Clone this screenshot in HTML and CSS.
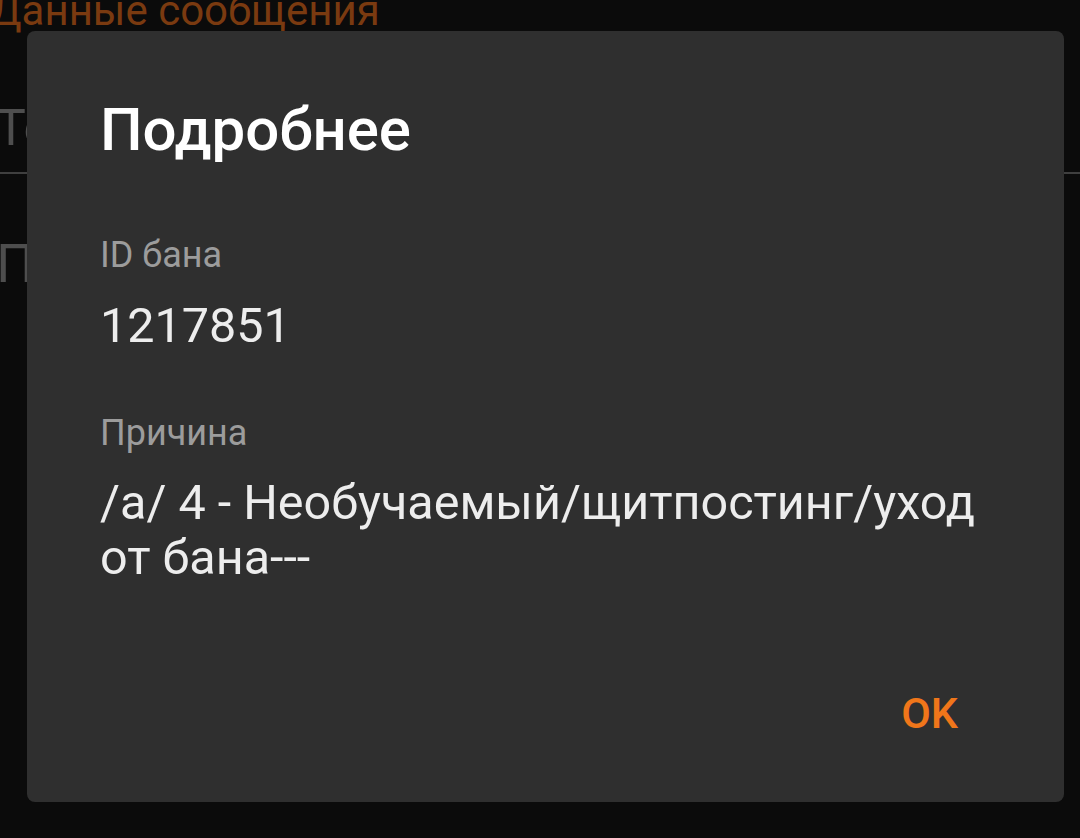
FILE: index.html
```html
<!DOCTYPE html>
<html>
<head>
  <title>Подробнее</title>
  <link rel="stylesheet" href="styles.css">
</head>
<body>
  <div class="screen">
    <h3 class="section-title">Данные сообщения</h3>
    <div class="field">Текст</div>
    <div class="divider"></div>
    <div class="field field-low">Параметры</div>
  </div>

  <div class="dialog">
    <h2 class="dialog-title">Подробнее</h2>
    <div class="label label-first">ID бана</div>
    <div class="value">1217851</div>
    <div class="label">Причина</div>
    <div class="value reason">/а/ 4 - Необучаемый/щитпостинг/уход от бана---</div>
    <div class="actions">
      <button class="btn-ok">OK</button>
    </div>
  </div>
</body>
</html>
```

FILE: styles.css
```css
html, body {
  margin: 0;
  height: 100%;
}

body {
  background-color: #0b0b0b;
  font-family: Roboto, "Noto Sans", sans-serif;
  overflow: hidden;
}

.section-title {
  margin: -10px 0 0 -10px;
  font-size: 42px;
  font-weight: 400;
  line-height: 42px;
  color: #7a3a10;
  white-space: nowrap;
}

.field {
  margin-left: -4px;
  font-size: 50px;
  line-height: 56px;
  color: #4e4e4e;
  margin-top: 68px;
  white-space: nowrap;
}

.divider {
  height: 2px;
  background-color: #3f3f3f;
  margin-top: 16px;
}

.field-low {
  font-size: 54px;
  margin-top: 62px;
}

.dialog {
  position: absolute;
  left: 27px;
  top: 31px;
  width: 1037px;
  height: 771px;
  box-sizing: border-box;
  padding: 65px 60px 0 73px;
  background-color: #2f2f2f;
  border-radius: 8px;
  display: flex;
  flex-direction: column;
}

.dialog-title {
  margin: 0;
  font-size: 60px;
  font-weight: 500;
  line-height: 68px;
  color: #ffffff;
}

.label {
  font-size: 36px;
  line-height: 40px;
  color: #9c9c9c;
  margin-top: 59px;
}

.label-first {
  margin-top: 71px;
}

.value {
  font-size: 48.5px;
  line-height: 56px;
  color: #ededed;
  margin-top: 23px;
}

.reason {
  line-height: 55px;
  margin-top: 22px;
}

.actions {
  margin-top: auto;
  display: flex;
  justify-content: flex-end;
  padding-right: 46px;
  padding-bottom: 64px;
}

.btn-ok {
  background: none;
  border: none;
  padding: 0;
  font-family: Roboto, "Noto Sans", sans-serif;
  font-size: 43px;
  font-weight: 500;
  line-height: 50px;
  color: #f0761a;
  cursor: pointer;
}
```
